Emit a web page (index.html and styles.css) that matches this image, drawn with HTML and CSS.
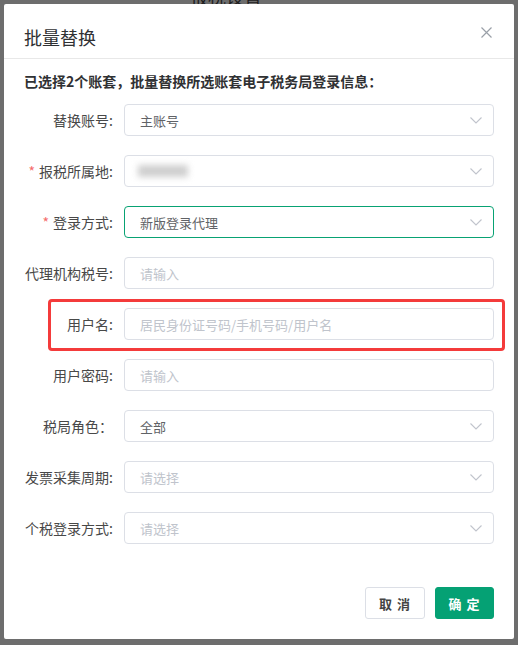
FILE: index.html
```html
<!DOCTYPE html>
<html lang="zh-CN">
<head>
<meta charset="utf-8">
<title>批量替换</title>
<link rel="stylesheet" href="styles.css">
</head>
<body>
<div class="page-title">报税设置</div>
<div class="mask">
  <div class="dialog">
    <div class="dialog-header">
      <span class="dialog-title">批量替换</span>
      <svg class="close" width="11" height="11" viewBox="0 0 11 11"><path d="M0.5 0.5 L10.5 10.5 M10.5 0.5 L0.5 10.5" stroke="#9aa0a8" stroke-width="1.2" fill="none"/></svg>
    </div>
    <div class="dialog-body">
      <p class="intro">已选择2个账套，批量替换所选账套电子税务局登录信息：</p>
      <div class="form">
        <div class="row">
          <label class="label">替换账号:</label>
          <div class="field select"><span class="value">主账号</span><svg class="arrow" width="12" height="7" viewBox="0 0 12 7"><polyline points="0.5,0.5 6,6 11.5,0.5" fill="none" stroke="#c0c4cc" stroke-width="1.1"/></svg></div>
        </div>
        <div class="row">
          <label class="label"><span class="req">*</span>报税所属地:</label>
          <div class="field select"><span class="blur"></span><svg class="arrow" width="12" height="7" viewBox="0 0 12 7"><polyline points="0.5,0.5 6,6 11.5,0.5" fill="none" stroke="#c0c4cc" stroke-width="1.1"/></svg></div>
        </div>
        <div class="row">
          <label class="label"><span class="req">*</span>登录方式:</label>
          <div class="field select focus"><span class="value">新版登录代理</span><svg class="arrow" width="12" height="7" viewBox="0 0 12 7"><polyline points="0.5,0.5 6,6 11.5,0.5" fill="none" stroke="#c0c4cc" stroke-width="1.1"/></svg></div>
        </div>
        <div class="row">
          <label class="label">代理机构税号:</label>
          <div class="field"><span class="placeholder">请输入</span></div>
        </div>
        <div class="row highlight-row">
          <label class="label">用户名:</label>
          <div class="field"><span class="placeholder">居民身份证号码/手机号码/用户名</span></div>
          <div class="highlight"></div>
        </div>
        <div class="row">
          <label class="label">用户密码:</label>
          <div class="field"><span class="placeholder">请输入</span></div>
        </div>
        <div class="row">
          <label class="label">税局角色：</label>
          <div class="field select"><span class="value">全部</span><svg class="arrow" width="12" height="7" viewBox="0 0 12 7"><polyline points="0.5,0.5 6,6 11.5,0.5" fill="none" stroke="#c0c4cc" stroke-width="1.1"/></svg></div>
        </div>
        <div class="row">
          <label class="label">发票采集周期:</label>
          <div class="field select"><span class="placeholder">请选择</span><svg class="arrow" width="12" height="7" viewBox="0 0 12 7"><polyline points="0.5,0.5 6,6 11.5,0.5" fill="none" stroke="#c0c4cc" stroke-width="1.1"/></svg></div>
        </div>
        <div class="row">
          <label class="label">个税登录方式:</label>
          <div class="field select"><span class="placeholder">请选择</span><svg class="arrow" width="12" height="7" viewBox="0 0 12 7"><polyline points="0.5,0.5 6,6 11.5,0.5" fill="none" stroke="#c0c4cc" stroke-width="1.1"/></svg></div>
        </div>
      </div>
    </div>
    <div class="dialog-footer">
      <button class="btn btn-default">取 消</button>
      <button class="btn btn-primary">确 定</button>
    </div>
  </div>
</div>
</body>
</html>
```
FILE: styles.css
```css
html, body {
  margin: 0;
  padding: 0;
}
body {
  width: 518px;
  height: 645px;
  background: #6d6d6d;
  font-family: "Noto Sans CJK SC", "Noto Sans", sans-serif;
  position: relative;
  overflow: hidden;
}
.page-title {
  position: absolute;
  top: -15px;
  left: 190px;
  font-size: 18px;
  line-height: 22px;
  color: #1e1e1e;
}
.mask {
  position: absolute;
  inset: 0;
  padding: 4px;
}
.dialog {
  position: relative;
  width: 510px;
  height: 635px;
  background: #fff;
  border-radius: 2px;
  display: flex;
  flex-direction: column;
  box-sizing: border-box;
}
.dialog-header {
  display: flex;
  justify-content: space-between;
  align-items: flex-start;
  padding: 20px 22px 8px 20px;
  border-bottom: 1px solid #e8e8e8;
  height: 26px;
}
.dialog-title {
  font-size: 18px;
  line-height: 26px;
  color: #303133;
}
.close {
  display: block;
  margin-top: 3px;
}
.dialog-body {
  padding: 12px 20px 0 20px;
}
.intro {
  margin: 0 0 13px 0;
  font-size: 14px;
  line-height: 20px;
  font-weight: bold;
  color: #303133;
}
.form {
  display: flex;
  flex-direction: column;
  gap: 19px;
}
.row {
  display: flex;
  align-items: center;
  height: 32px;
  position: relative;
}
.label {
  width: 100px;
  padding-right: 11px;
  margin-left: -20px;
  padding-left: 9px;
  box-sizing: content-box;
  text-align: right;
  font-size: 14px;
  letter-spacing: 0;
  color: #484848;
  white-space: nowrap;
}
.req {
  color: #f56c6c;
  margin-right: 4px;
}
.field {
  width: 370px;
  height: 32px;
  box-sizing: border-box;
  border: 1px solid #dcdfe6;
  border-radius: 4px;
  padding: 0 11px 0 15px;
  display: flex;
  align-items: center;
  justify-content: space-between;
  font-size: 13px;
}
.field.focus {
  border-color: #08a273;
}
.value {
  color: #606266;
}
.placeholder {
  color: #c0c4cc;
}
.blur {
  display: inline-block;
  width: 50px;
  height: 12px;
  background: #cfcfcf;
  filter: blur(3px);
  margin-left: -2px;
}
.arrow {
  display: block;
}
.highlight {
  position: absolute;
  left: 24px;
  top: -9px;
  width: 457px;
  height: 52px;
  box-sizing: border-box;
  border: 3px solid #f43b3b;
  border-radius: 4px;
  pointer-events: none;
}
.dialog-footer {
  margin-top: auto;
  display: flex;
  justify-content: flex-end;
  gap: 10px;
  padding: 0 20px 20px 0;
}
.btn {
  height: 32px;
  box-sizing: border-box;
  border-radius: 3px;
  font-family: "Noto Sans CJK SC", sans-serif;
  font-size: 13px;
  font-weight: bold;
  padding: 0;
  letter-spacing: 1px;
}
.btn-default {
  width: 60px;
  background: #fff;
  border: 1px solid #dcdfe6;
  color: #444;
}
.btn-primary {
  width: 59px;
  background: #05a174;
  border: 1px solid #05a174;
  color: #fff;
}
```
